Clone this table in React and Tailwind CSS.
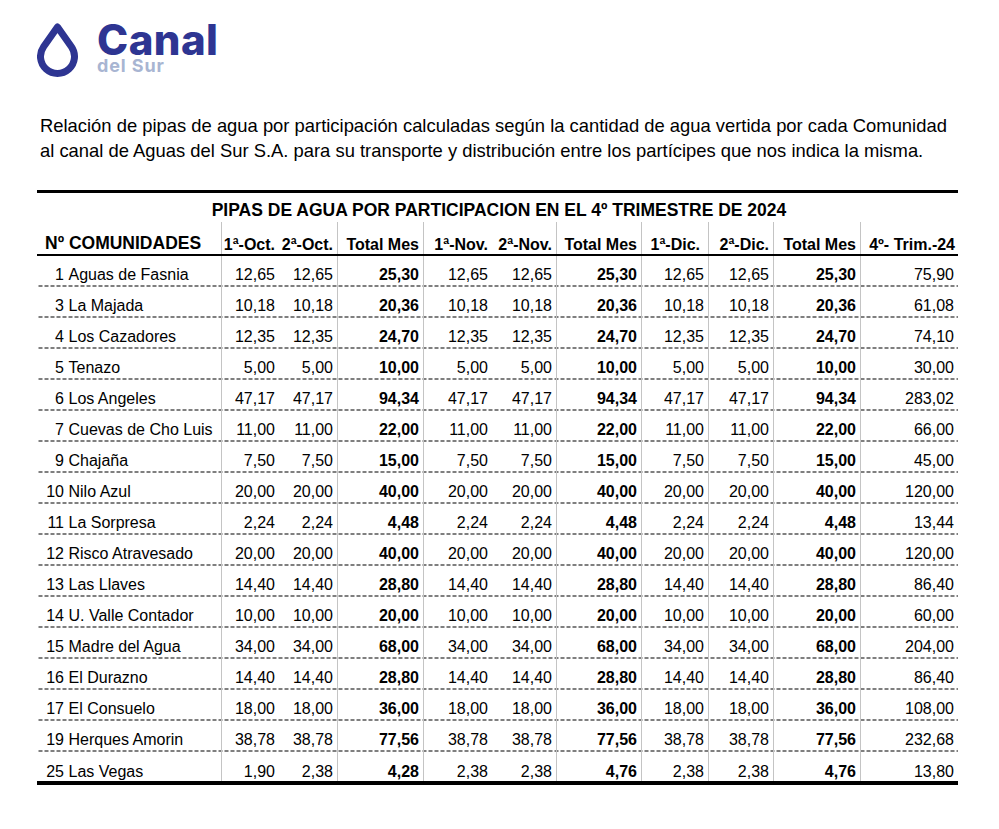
import React from 'react';

const rows = [
  [1, 'Aguas de Fasnia', '12,65', '12,65', '25,30', '12,65', '12,65', '25,30', '12,65', '12,65', '25,30', '75,90'],
  [3, 'La Majada', '10,18', '10,18', '20,36', '10,18', '10,18', '20,36', '10,18', '10,18', '20,36', '61,08'],
  [4, 'Los Cazadores', '12,35', '12,35', '24,70', '12,35', '12,35', '24,70', '12,35', '12,35', '24,70', '74,10'],
  [5, 'Tenazo', '5,00', '5,00', '10,00', '5,00', '5,00', '10,00', '5,00', '5,00', '10,00', '30,00'],
  [6, 'Los Angeles', '47,17', '47,17', '94,34', '47,17', '47,17', '94,34', '47,17', '47,17', '94,34', '283,02'],
  [7, 'Cuevas de Cho Luis', '11,00', '11,00', '22,00', '11,00', '11,00', '22,00', '11,00', '11,00', '22,00', '66,00'],
  [9, 'Chajaña', '7,50', '7,50', '15,00', '7,50', '7,50', '15,00', '7,50', '7,50', '15,00', '45,00'],
  [10, 'Nilo Azul', '20,00', '20,00', '40,00', '20,00', '20,00', '40,00', '20,00', '20,00', '40,00', '120,00'],
  [11, 'La Sorpresa', '2,24', '2,24', '4,48', '2,24', '2,24', '4,48', '2,24', '2,24', '4,48', '13,44'],
  [12, 'Risco Atravesado', '20,00', '20,00', '40,00', '20,00', '20,00', '40,00', '20,00', '20,00', '40,00', '120,00'],
  [13, 'Las Llaves', '14,40', '14,40', '28,80', '14,40', '14,40', '28,80', '14,40', '14,40', '28,80', '86,40'],
  [14, 'U. Valle Contador', '10,00', '10,00', '20,00', '10,00', '10,00', '20,00', '10,00', '10,00', '20,00', '60,00'],
  [15, 'Madre del Agua', '34,00', '34,00', '68,00', '34,00', '34,00', '68,00', '34,00', '34,00', '68,00', '204,00'],
  [16, 'El Durazno', '14,40', '14,40', '28,80', '14,40', '14,40', '28,80', '14,40', '14,40', '28,80', '86,40'],
  [17, 'El Consuelo', '18,00', '18,00', '36,00', '18,00', '18,00', '36,00', '18,00', '18,00', '36,00', '108,00'],
  [19, 'Herques Amorin', '38,78', '38,78', '77,56', '38,78', '38,78', '77,56', '38,78', '38,78', '77,56', '232,68'],
  [25, 'Las Vegas', '1,90', '2,38', '4,28', '2,38', '2,38', '4,76', '2,38', '2,38', '4,76', '13,80'],
];

const headers = ['1ª-Oct.', '2ª-Oct.', 'Total Mes', '1ª-Nov.', '2ª-Nov.', 'Total Mes', '1ª-Dic.', '2ª-Dic.', 'Total Mes', '4º- Trim.-24'];

// vertical grid lines sit on the left of these columns (index 1..10)
const colLine = [
  'border-l border-[#c4c4c4]',
  '',
  'border-l border-[#c4c4c4]',
  'border-l border-[#c4c4c4]',
  '',
  'border-l border-[#c4c4c4]',
  'border-l border-[#c4c4c4]',
  'border-l border-[#c4c4c4]',
  'border-l border-[#c4c4c4]',
  'border-l border-[#c4c4c4]',
];

const headPad = ['pr-1', 'pr-1', 'pr-1', 'pr-1', 'pr-1', 'pr-1', 'pr-2', 'pr-1', 'pr-1', 'pr-[3px]'];

const gridCols = 'grid grid-cols-[184px_58px_58px_86px_69px_64px_85px_67px_65px_87px_98px]';
const dashed = 'bg-[linear-gradient(to_right,#7f7f7f_4px,transparent_4px)] bg-[length:6px_2px] bg-bottom bg-repeat-x';

function Logo() {
  return (
    <div className="flex items-start">
      <svg className="mt-[1px] w-[42px] h-[56px]" viewBox="0 0 42 56" fill="none">
        <path
          d="M20.5 5 L34.4 24.7 A17 17 0 1 1 6.6 24.7 Z"
          stroke="#2e3592"
          strokeWidth="7"
          strokeLinejoin="round"
        />
      </svg>
      <div className="ml-[18px] font-['Inter',sans-serif]">
        <div className="text-[42px] leading-[38px] font-extrabold text-[#2e3592] tracking-[0.01em]">Canal</div>
        <div className="text-[18px] leading-[14px] font-bold text-[#a8b5d2] tracking-[0.05em]">del Sur</div>
      </div>
    </div>
  );
}

export default function App() {
  return (
    <div className="min-h-screen bg-white text-black font-['Liberation_Sans',Arial,sans-serif]">
      <div className="px-[37px] pt-[21px]">
        <Logo />

        <p className="mt-[35px] pl-[3px] text-[18.4px] leading-[25px]">
          Relación de pipas de agua por participación calculadas según la cantidad de agua vertida por cada Comunidad
          <br />
          al canal de Aguas del Sur S.A. para su transporte y distribución entre los partícipes que nos indica la misma.
        </p>

        {/* Table */}
        <div className="mt-[27px] w-[921px] border-t-[3px] border-b-[4px] border-black leading-[normal]">
          <div className="h-[29px] flex items-end justify-center pb-[1px] text-[17.5px] font-bold pl-[3px]">
            PIPAS DE AGUA POR PARTICIPACION EN EL 4º TRIMESTRE DE 2024
          </div>

          <div className={`${gridCols} h-[34px] border-b-2 border-black font-bold`}>
            <div className="flex items-end pb-0 pl-2 text-[17.5px]">Nº COMUNIDADES</div>
            {headers.map((h, i) => (
              <div key={i} className={`flex items-end justify-end pb-0 text-[16px] whitespace-nowrap ${headPad[i]} ${colLine[i]}`}>
                {h}
              </div>
            ))}
          </div>

          {rows.map((r, ri) => {
            const last = ri === rows.length - 1;
            return (
              <div key={ri} className={`${gridCols} text-[16px] ${last ? 'h-[29px]' : `h-[31px] ${dashed}`}`}>
                <div className={`flex items-end pl-[9px] ${last ? 'pb-0' : 'pb-[3px]'}`}>
                  <span className="w-[18px] text-right">{r[0]}</span>
                  <span className="ml-[4.5px] whitespace-nowrap">{r[1]}</span>
                </div>
                {r.slice(2).map((v, i) => (
                  <div
                    key={i}
                    className={`flex items-end justify-end pr-1 ${last ? 'pb-0' : 'pb-[3px]'} ${colLine[i]} ${i === 2 || i === 5 || i === 8 ? 'font-bold' : ''}`}
                  >
                    {v}
                  </div>
                ))}
              </div>
            );
          })}
        </div>
      </div>
    </div>
  );
}
